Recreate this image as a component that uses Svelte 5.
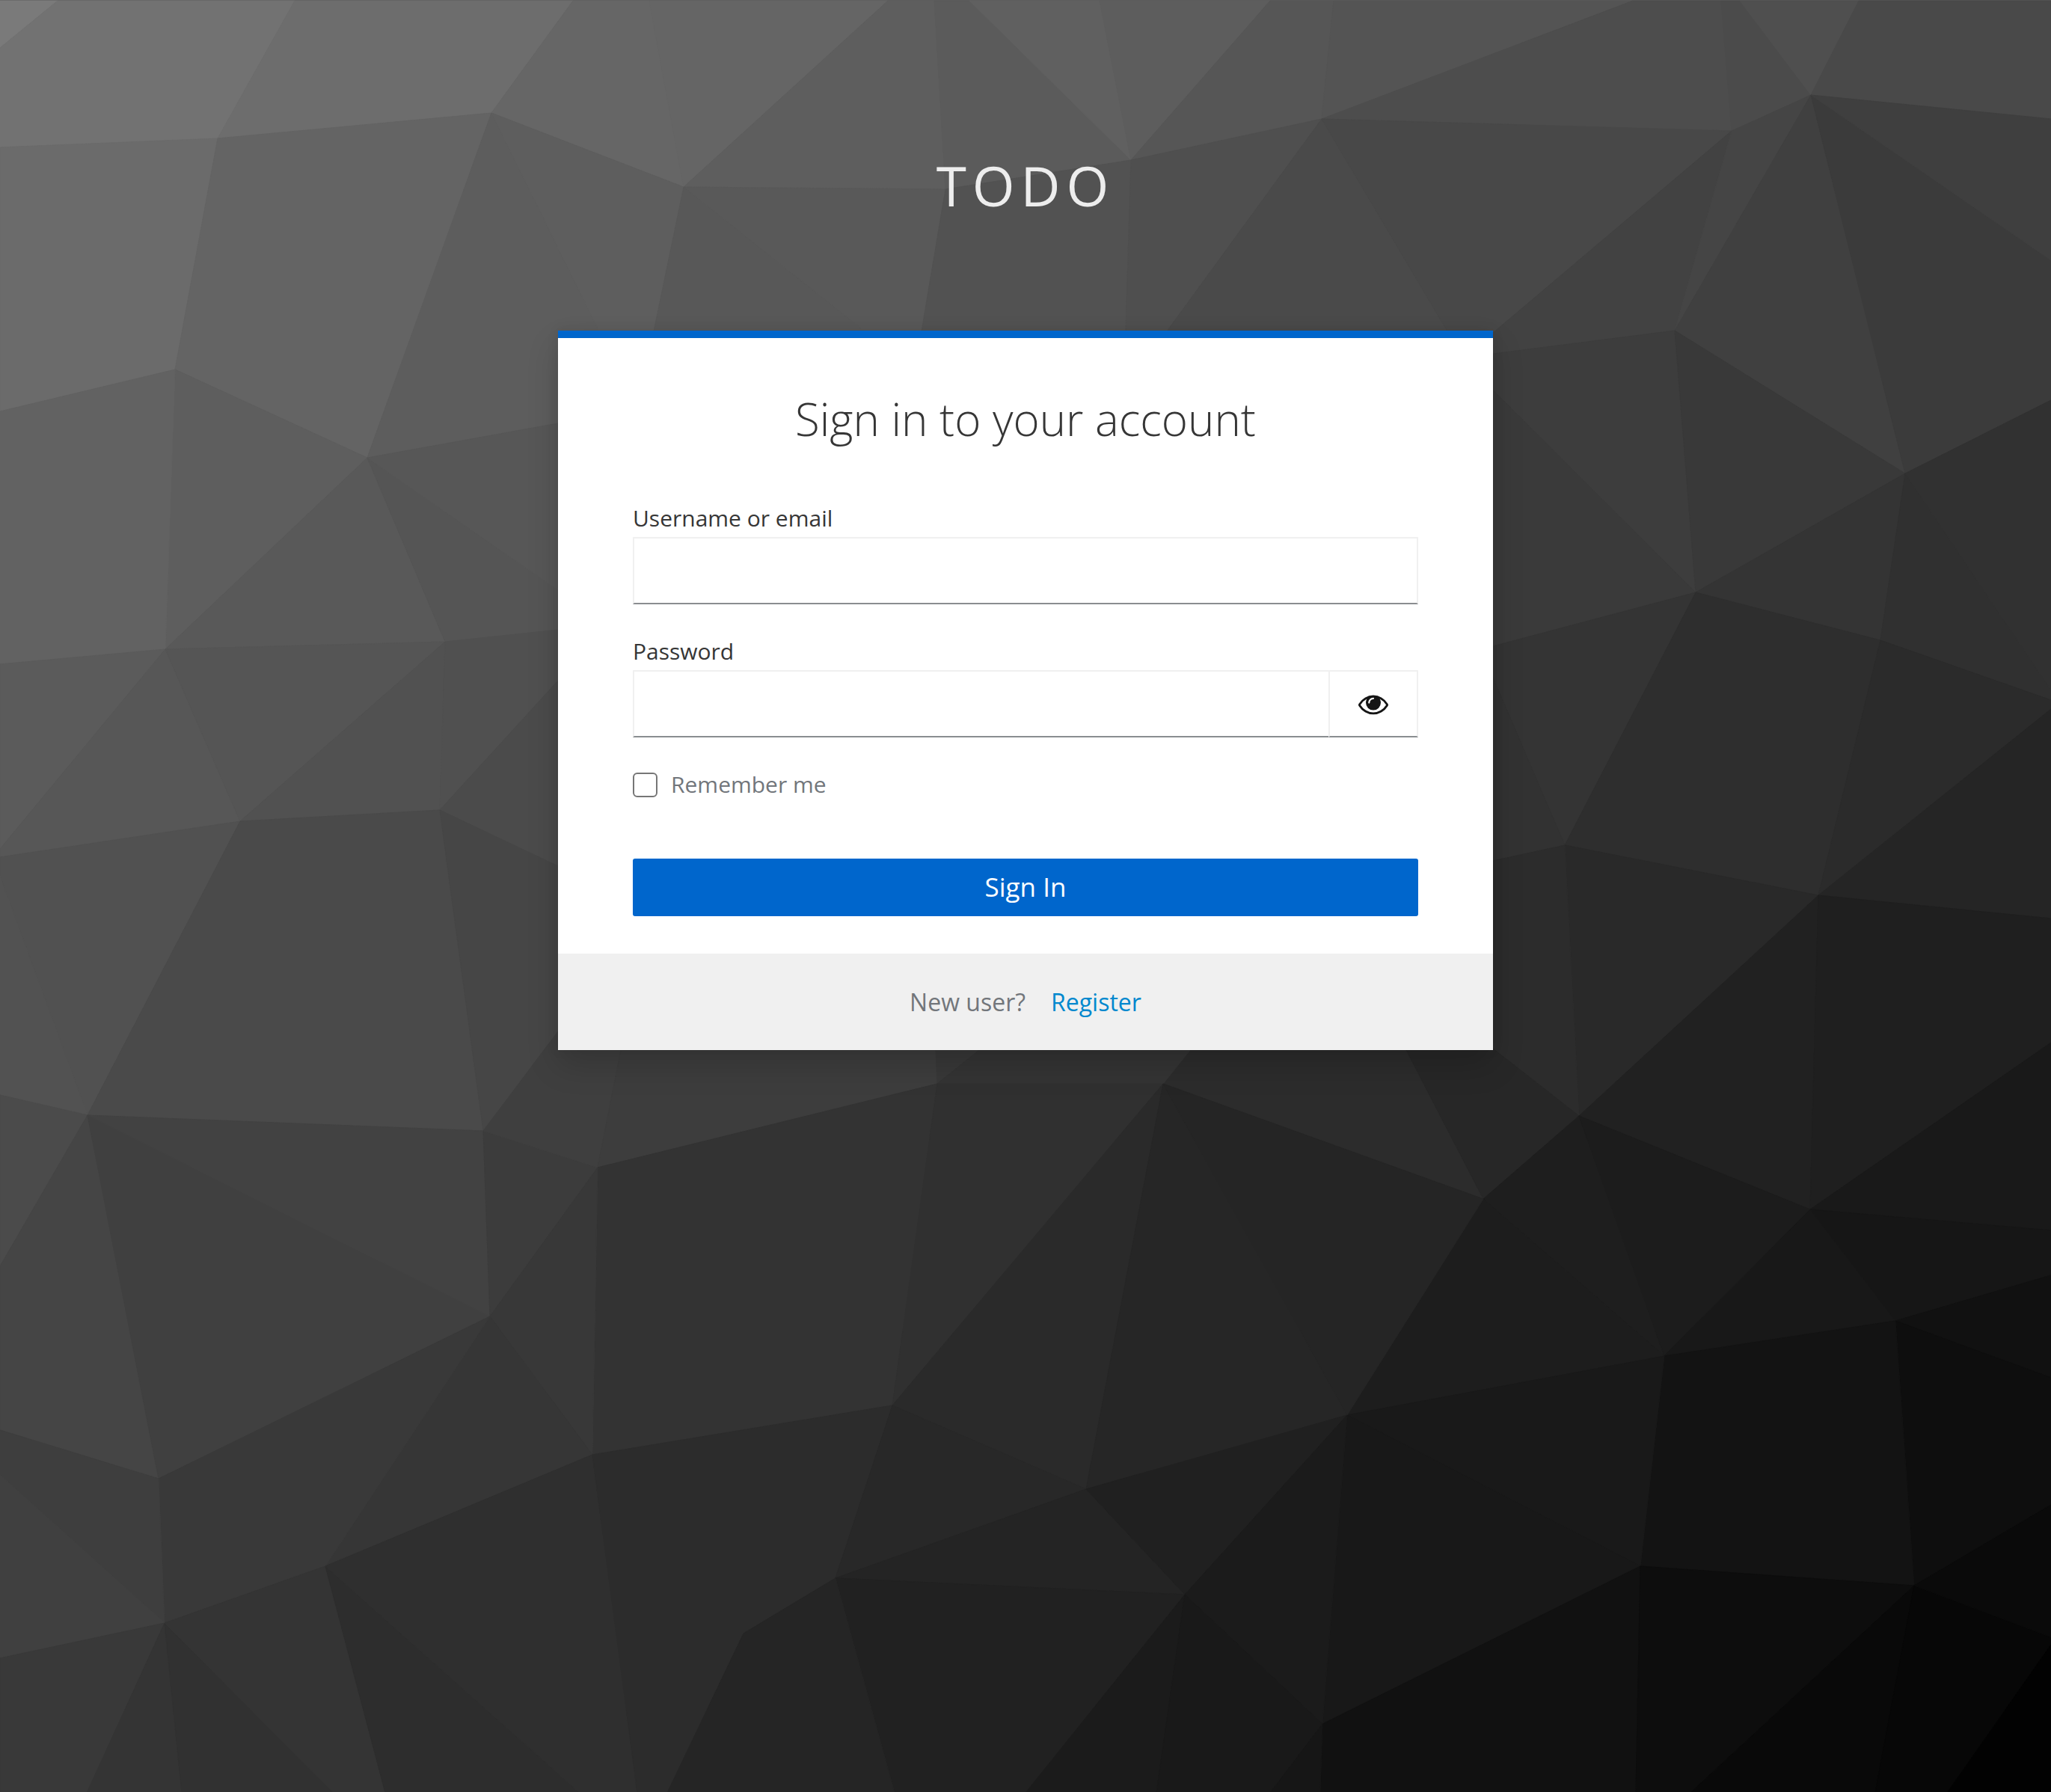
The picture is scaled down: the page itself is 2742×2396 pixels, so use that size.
<script>
  // Facets of the low-poly backdrop: [fill, points]
  const facets = [
    ['#7a7a7a', '0,0 77,0 0,63'],
    ['#727272', '77,0 394,0 291,184 0,196 0,63'],
    ['#6d6d6d', '394,0 766,0 657,150 291,184'],
    ['#666666', '766,0 868,0 914,249 657,150'],
    ['#656565', '868,0 1187,0 914,249'],
    ['#5e5e5e', '1187,0 1249,0 1264,252 914,249'],
    ['#5b5b5b', '1249,0 1296,0 1512,213 1264,252'],
    ['#606060', '1296,0 1470,0 1512,213'],
    ['#5d5d5d', '1470,0 1698,0 1512,213'],
    ['#565656', '1698,0 1783,0 1767,158 1512,213'],
    ['#545454', '1783,0 2183,0 1767,158'],
    ['#4d4d4d', '2183,0 2301,0 2315,174 1767,158'],
    ['#4b4b4b', '2301,0 2326,0 2421,126 2315,174'],
    ['#4f4f4f', '2326,0 2485,0 2421,126'],
    ['#494949', '2485,0 2742,0 2742,158 2421,126'],
    ['#6b6b6b', '0,196 291,184 234,493 0,549'],
    ['#646464', '291,184 657,150 491,611 234,493'],
    ['#5d5d5d', '657,150 801,442 801,470 746,565 491,611'],
    ['#5e5e5e', '657,150 914,249 874,442 801,442'],
    ['#585858', '914,249 1156,442 874,442'],
    ['#595959', '914,249 1264,252 1232,442 1156,442'],
    ['#525252', '1264,252 1512,213 1505,442 1232,442'],
    ['#4f4f4f', '1512,213 1767,158 1560,442 1505,442'],
    ['#4a4a4a', '1767,158 1935,442 1560,442'],
    ['#484848', '1767,158 2315,174 1998,444 1935,442'],
    ['#424242', '2315,174 2239,441 1996,472 1996,444'],
    ['#454545', '2315,174 2421,126 2239,441'],
    ['#404040', '2421,126 2547,632 2239,441'],
    ['#3b3b3b', '2421,126 2742,347 2742,534 2547,632'],
    ['#3f3f3f', '2421,126 2742,158 2742,347'],
    ['#3d3d3d', '1996,472 2239,441 2267,791 1996,521'],
    ['#393939', '2239,441 2547,632 2267,791'],
    ['#3a3a3a', '1996,521 2267,791 1996,863'],
    ['#343434', '2267,791 2547,632 2514,855'],
    ['#303030', '2547,632 2742,922 2742,935 2514,855'],
    ['#313131', '2547,632 2742,534 2742,922'],
    ['#343434', '1996,863 2267,791 2092,1129 1996,905'],
    ['#323232', '1996,905 2092,1129 1996,1150'],
    ['#2e2e2e', '2267,791 2514,855 2431,1196 2092,1129'],
    ['#2b2b2b', '2514,855 2742,935 2742,947 2431,1196'],
    ['#252525', '2431,1196 2742,947 2742,1227'],
    ['#292929', '2092,1129 2431,1196 2111,1491'],
    ['#2c2c2c', '1996,1150 2092,1129 2111,1491 1996,1401'],
    ['#212121', '2111,1491 2431,1196 2420,1616'],
    ['#1f1f1f', '2431,1196 2742,1227 2742,1393 2420,1616'],
    ['#191919', '2420,1616 2742,1393 2742,1644'],
    ['#2c2c2c', '1555,1448 1591,1403 1880,1403 1983,1602'],
    ['#272727', '1880,1403 1996,1401 2111,1491 1983,1602'],
    ['#1e1e1e', '1983,1602 2111,1491 2225,1812'],
    ['#1c1c1c', '2111,1491 2420,1616 2225,1812'],
    ['#1d1d1d', '1983,1602 2225,1812 1801,1891'],
    ['#181818', '2420,1616 2534,1765 2225,1812'],
    ['#161616', '2420,1616 2742,1644 2742,1704 2534,1765'],
    ['#111111', '2534,1765 2742,1704 2742,1841'],
    ['#0e0e0e', '2534,1765 2742,1841 2742,2011 2559,2119'],
    ['#131313', '2225,1812 2534,1765 2559,2119 2193,2093'],
    ['#191919', '1801,1891 2225,1812 2193,2093'],
    ['#181818', '1801,1891 2193,2093 1768,2304'],
    ['#111111', '1768,2304 2193,2093 2187,2396 1765,2396'],
    ['#0d0d0d', '2193,2093 2559,2119 2260,2396 2187,2396'],
    ['#090909', '2559,2119 2507,2396 2260,2396'],
    ['#070707', '2559,2119 2742,2188 2742,2198 2603,2396 2507,2396'],
    ['#020202', '2742,2198 2742,2396 2603,2396'],
    ['#0a0a0a', '2559,2119 2742,2011 2742,2188'],
    ['#5e5e5e', '234,493 491,611 221,867'],
    ['#626262', '0,549 234,493 221,867 0,887'],
    ['#595959', '491,611 595,857 221,867'],
    ['#555555', '491,611 746,788 746,841 595,857'],
    ['#575757', '491,611 746,565 746,788'],
    ['#5b5b5b', '0,887 221,867 0,1134'],
    ['#575757', '221,867 321,1097 0,1145 0,1134'],
    ['#555555', '221,867 595,857 321,1097'],
    ['#515151', '595,857 588,1082 321,1097'],
    ['#505050', '595,857 746,841 746,909 588,1082'],
    ['#4b4b4b', '588,1082 746,909 746,1157'],
    ['#515151', '0,1145 321,1097 117,1490 0,1170'],
    ['#525252', '0,1170 117,1490 0,1463'],
    ['#4a4a4a', '321,1097 588,1082 646,1511 117,1490'],
    ['#464646', '588,1082 746,1157 746,1378 646,1511'],
    ['#4b4b4b', '0,1463 117,1490 0,1692'],
    ['#454545', '117,1490 212,1976 0,1911 0,1692'],
    ['#404040', '117,1490 655,1759 212,1976'],
    ['#424242', '117,1490 646,1511 655,1759'],
    ['#3c3c3c', '646,1511 799,1560 655,1759'],
    ['#3f3f3f', '646,1511 746,1378 746,1403 830,1403 799,1560'],
    ['#3d3d3d', '799,1560 830,1403 1251,1403 1253,1448'],
    ['#383838', '1253,1448 1251,1403 1309,1403'],
    ['#343434', '1253,1448 1309,1403 1591,1403 1555,1448'],
    ['#333333', '799,1560 1253,1448 1193,1878 792,1944'],
    ['#303030', '1253,1448 1555,1448 1193,1878'],
    ['#2a2a2a', '1555,1448 1452,1990 1193,1878'],
    ['#262626', '1555,1448 1801,1891 1452,1990'],
    ['#252525', '1555,1448 1983,1602 1801,1891'],
    ['#383838', '655,1759 799,1560 792,1944'],
    ['#363636', '655,1759 792,1944 435,2093'],
    ['#393939', '212,1976 655,1759 435,2093 220,2169'],
    ['#3e3e3e', '0,1911 212,1976 220,2169 0,1971'],
    ['#404040', '0,1971 220,2169 0,2216'],
    ['#393939', '0,2216 220,2169 116,2396 0,2396'],
    ['#343434', '220,2169 243,2396 116,2396'],
    ['#313131', '220,2169 446,2396 243,2396'],
    ['#343434', '220,2169 435,2093 515,2396 446,2396'],
    ['#2d2d2d', '435,2093 775,2396 515,2396'],
    ['#2f2f2f', '435,2093 792,1944 852,2396 775,2396'],
    ['#2c2c2c', '792,1944 1193,1878 1117,2109 994,2183 892,2396 852,2396'],
    ['#282828', '1193,1878 1452,1990 1117,2109'],
    ['#242424', '1117,2109 1452,1990 1584,2131'],
    ['#202020', '1452,1990 1801,1891 1584,2131'],
    ['#1b1b1b', '1801,1891 1768,2304 1584,2131'],
    ['#212121', '1117,2109 1584,2131 1371,2396 1196,2396'],
    ['#252525', '1117,2109 1196,2396 892,2396 994,2183'],
    ['#1b1b1b', '1584,2131 1546,2396 1371,2396'],
    ['#191919', '1584,2131 1768,2304 1698,2396 1546,2396'],
    ['#161616', '1768,2304 1765,2396 1698,2396']
  ];

  let username = $state('');
  let password = $state('');
  let remember = $state(false);
  let visible = $state(false);
</script>

<div class="page">
  <svg class="backdrop" viewBox="0 -1 2742 2396" preserveAspectRatio="xMidYMid slice" aria-hidden="true">
    {#each facets as [fill, points]}
      <polygon {points} {fill} stroke={fill} />
    {/each}
  </svg>

  <div class="login">
    <header class="brand">TODO</header>

    <main class="card">
      <h1>Sign in to your account</h1>

      <form onsubmit={(e) => e.preventDefault()}>
        <div class="field">
          <label for="username">Username or email</label>
          <input id="username" class="text" type="text" autocomplete="username" bind:value={username} />
        </div>

        <div class="field">
          <label for="password">Password</label>
          <div class="group">
            <input
              id="password"
              class="text"
              type={visible ? 'text' : 'password'}
              autocomplete="current-password"
              bind:value={password}
            />
            <button
              class="reveal"
              type="button"
              aria-label={visible ? 'Hide password' : 'Show password'}
              onclick={() => (visible = !visible)}
            >
              <svg viewBox="0 0 1792 1792" aria-hidden="true">
                <path
                  d="M1664 960q-152-236-381-353 61 104 61 225 0 185-131.5 316.5t-316.5 131.5-316.5-131.5-131.5-316.5q0-121 61-225-229 117-381 353 133 205 333.5 326.5t434.5 121.5 434.5-121.5 333.5-326.5zm-720-384q0-20-14-34t-34-14q-125 0-214.5 89.5t-89.5 214.5q0 20 14 34t34 14 34-14 14-34q0-86 61-147t147-61q20 0 34-14t14-34zm848 384q0 34-20 69-140 230-376.5 368.5t-499.5 138.5-499.5-139-376.5-368q-20-35-20-69t20-69q140-229 376.5-368t499.5-139 499.5 139 376.5 368q20 35 20 69z"
                />
              </svg>
            </button>
          </div>
        </div>

        <label class="remember">
          <input type="checkbox" bind:checked={remember} />
          Remember me
        </label>

        <button class="submit" type="submit">Sign In</button>
      </form>

      <footer>
        <span>New user?</span>
        <a href="#register">Register</a>
      </footer>
    </main>
  </div>
</div>

<style>
  :global(body) {
    margin: 0;
    background: #333;
  }

  .page {
    display: grid;
    min-height: 100vh;
    font-family: 'Open Sans', 'Noto Sans', sans-serif;
    color: #363636;
  }

  .backdrop {
    grid-area: 1 / 1;
    contain: size;
    width: 100%;
    height: 100%;
    background: #5c5c5c;
  }

  .login {
    grid-area: 1 / 1;
    position: relative;
    display: flex;
    flex-direction: column;
    align-items: center;
    padding: 194px 40px 80px;
  }

  .brand {
    margin-bottom: 140px;
    font-size: 73px;
    line-height: 108px;
    letter-spacing: 8px;
    color: #ededed;
  }

  .card {
    box-sizing: border-box;
    width: 100%;
    max-width: 1250px;
    border-top: 10px solid #06c;
    background: #fff;
    box-shadow:
      0 20px 40px rgba(3, 3, 3, 0.16),
      0 0 15px rgba(3, 3, 3, 0.08);
  }

  h1 {
    margin: 0;
    padding: 69px 100px 71px;
    font-size: 60px;
    font-weight: 300;
    line-height: 78px;
    text-align: center;
  }

  form {
    display: flex;
    flex-direction: column;
    gap: 40px;
    padding: 0 100px 50px;
  }

  .field {
    display: flex;
    flex-direction: column;
    gap: 2px;
  }

  label {
    font-size: 30px;
    line-height: 46px;
  }

  .text {
    box-sizing: border-box;
    width: 100%;
    min-width: 0;
    height: 90px;
    padding: 0 20px;
    border: 2px solid #f0f0f0;
    border-bottom-color: #8a8d90;
    border-radius: 0;
    background: #fff;
    color: #151515;
    font: inherit;
    font-size: 35px;
  }

  .group {
    display: flex;
  }

  .group .text {
    flex: 1;
    border-right: 0;
  }

  .reveal {
    display: flex;
    align-items: center;
    justify-content: center;
    box-sizing: border-box;
    width: 120px;
    padding: 0;
    border: 2px solid #f0f0f0;
    border-bottom-color: #8a8d90;
    background: #fff;
    cursor: pointer;
  }

  .reveal svg {
    width: 40px;
    height: 40px;
    fill: #151515;
  }

  .remember {
    display: flex;
    align-items: center;
    gap: 18px;
    margin-bottom: 36px;
    color: #72767b;
  }

  .remember input {
    appearance: none;
    box-sizing: border-box;
    width: 33px;
    height: 33px;
    margin: 0;
    border: 2px solid #767676;
    border-radius: 6px;
    background: #fff;
  }

  .remember input:checked {
    border-color: #06c;
    background: #06c;
  }

  .submit {
    height: 77px;
    padding: 0 40px 2px;
    border: 0;
    border-radius: 3px;
    background: #06c;
    color: #fff;
    font: inherit;
    font-size: 35px;
    cursor: pointer;
  }

  footer {
    display: flex;
    justify-content: center;
    gap: 34px;
    padding: 40px;
    background: #f0f0f0;
    font-size: 32px;
    line-height: 49px;
    color: #72767b;
  }

  footer a {
    color: #0088ce;
    text-decoration: none;
  }
</style>
